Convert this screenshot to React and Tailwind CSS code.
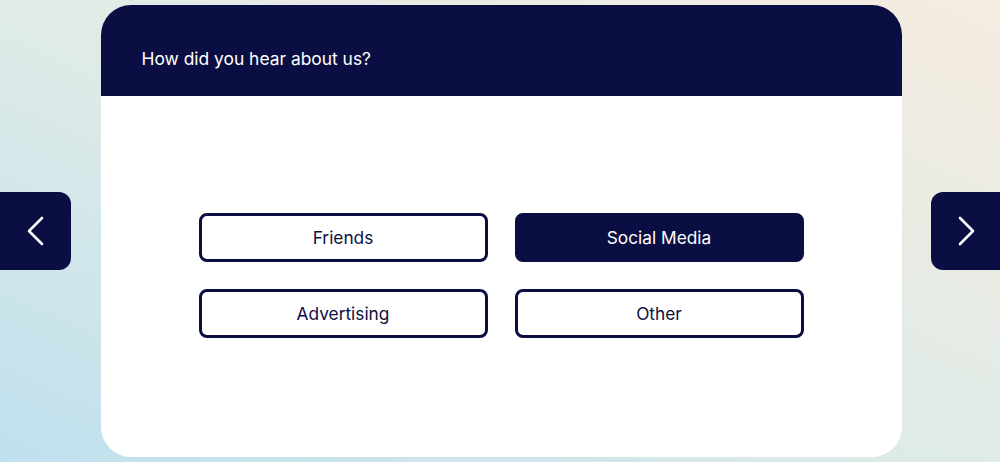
const options = ["Friends", "Social Media", "Advertising", "Other"];

const Chevron = ({ dir }) => (
  <svg width="20" height="30" viewBox="0 0 20 30" fill="none">
    <path
      d={dir === "left" ? "M16 2 L3 15 L16 28" : "M4 2 L17 15 L4 28"}
      stroke="white"
      strokeWidth="2.6"
      strokeLinecap="round"
      strokeLinejoin="round"
    />
  </svg>
);

const App = () => {
  const selected = "Social Media";
  return (
    <div
      className="h-[462px] w-[1000px] flex items-center justify-between overflow-hidden bg-[linear-gradient(to_top_right,#bfe0ee,#e0ebe7_50%,#f6ece0)]"
      style={{ fontFamily: "Inter, 'Noto Sans', sans-serif" }}
    >
      <button className="w-[71px] h-[78px] bg-[#0b0e42] rounded-r-[12px] flex items-center justify-center">
        <Chevron dir="left" />
      </button>

      <div className="w-[801px] h-[452px] bg-white rounded-[30px] overflow-hidden flex flex-col">
        <div className="h-[91px] bg-[#0b0e42] pl-[41px] pt-[42px]">
          <h1 className="text-white text-[17.4px] leading-[24px]">How did you hear about us?</h1>
        </div>
        <div className="flex-1 flex items-center justify-center">
          <div className="grid grid-cols-2 gap-x-[27px] gap-y-[27px] -mt-[2px]">
            {options.map((o) => (
              <button
                key={o}
                className={
                  o === selected
                    ? "w-[289px] h-[49px] rounded-[8px] border-[3px] border-[#0b0e42] bg-[#0b0e42] text-white text-[17.3px] pt-[1px]"
                    : "w-[289px] h-[49px] rounded-[8px] border-[3px] border-[#0b0e42] bg-white text-[#0b0e42] text-[17.3px] pt-[1px]"
                }
              >
                {o}
              </button>
            ))}
          </div>
        </div>
      </div>

      <button className="w-[69px] h-[78px] bg-[#0b0e42] rounded-l-[12px] flex items-center justify-center">
        <Chevron dir="right" />
      </button>
    </div>
  );
};

export default App;
